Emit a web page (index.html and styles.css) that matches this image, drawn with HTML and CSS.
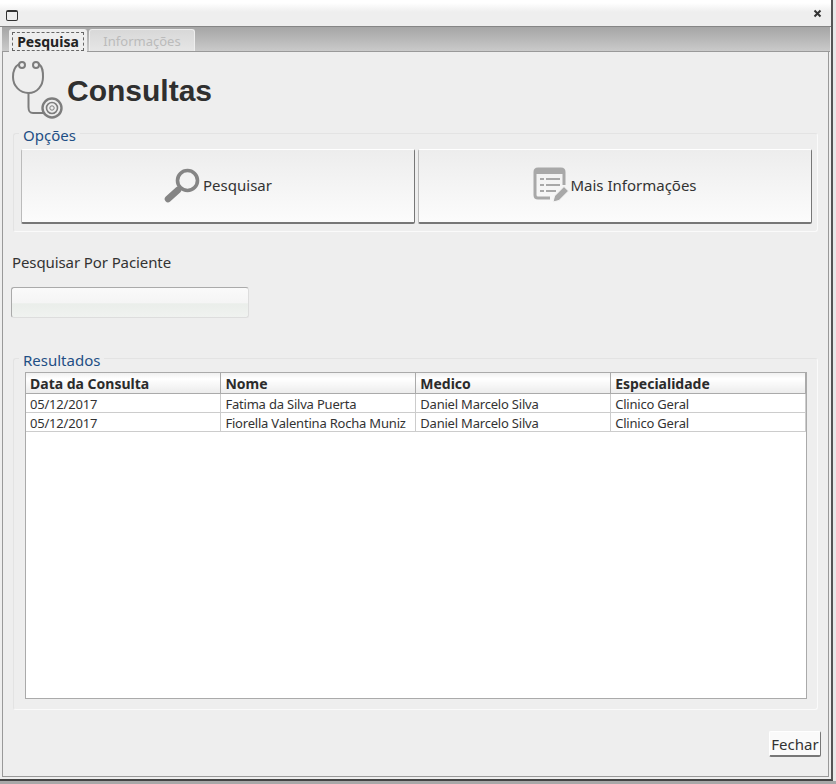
FILE: index.html
```html
<!DOCTYPE html>
<html lang="pt">
<head>
    <meta charset="UTF-8">
    <title>Consultas</title>
    <link rel="stylesheet" href="styles.css">
</head>
<body>
    <div class="window">
        <div class="titlebar">
            <span class="winIcon"></span>
            <svg class="closeIcon" width="9" height="9" viewBox="0 0 9 9"><path d="M1.5 1.5 L7.5 7.5 M7.5 1.5 L1.5 7.5" stroke="#333" stroke-width="2"/></svg>
        </div>
        <div class="tabs">
            <div class="tab active"><span>Pesquisa</span></div>
            <div class="tab">Informações</div>
        </div>
        <div class="panel">
            <div class="heading">
                <svg width="52" height="60" viewBox="0 0 52 60" fill="none" stroke="#7d7d7d" stroke-width="2">
                    <circle cx="10" cy="5" r="3"/>
                    <circle cx="24" cy="5" r="3"/>
                    <path d="M7 4 C2 7 1 12 1 17 C1 26 8 33 16.500 33 C25 33 31 26 31 17 C31 12 31 7 27 4"/>
                    <path d="M16.500 33 V47 C16.500 52 18 53 21 53 H31"/>
                    <circle cx="40" cy="48" r="9.500" stroke-width="2.400"/>
                    <circle cx="40" cy="48" r="5.500" stroke-width="1.600"/>
                    <circle cx="40" cy="48" r="2.200" stroke-width="1"/>
                </svg>
                <h1>Consultas</h1>
            </div>

            <fieldset class="group options">
                <legend>Opções</legend>
                <div class="optionRow">
                    <button class="bigBtn">
                        <svg width="38" height="38" viewBox="0 0 38 38" fill="none">
                            <circle cx="23.500" cy="14.500" r="10" stroke="#858585" stroke-width="3.600"/>
                            <path d="M14 24 L4 33" stroke="#858585" stroke-width="6.500" stroke-linecap="round"/>
                        </svg>
                        Pesquisar
                    </button>
                    <button class="bigBtn">
                        <svg width="36" height="36" viewBox="0 0 36 36" fill="none">
                            <path d="M17 31 H5 Q2 31 2 28 V5 Q2 2 5 2 H28 Q31 2 31 5 V18" stroke="#a8a8a8" stroke-width="3"/>
                            <path d="M2 5 H31" stroke="#a8a8a8" stroke-width="4"/>
                            <path d="M7 12 H11 M13 12 H27 M7 18 H11 M13 18 H27 M7 24 H11 M13 24 H23" stroke="#a8a8a8" stroke-width="2"/>
                            <path d="M20 35 L21.500 29 L31 19.500 L35.500 24 L26 33.500 Z" fill="#a8a8a8" stroke="#f6f6f6"/>
                        </svg>
                        Mais Informações
                    </button>
                </div>
            </fieldset>

            <label class="searchLabel">Pesquisar Por Paciente</label>
            <div class="searchInput"></div>

            <fieldset class="group results">
                <legend>Resultados</legend>
                <div class="tableBox">
                    <table>
                        <thead>
                            <tr><th>Data da Consulta</th><th>Nome</th><th>Medico</th><th>Especialidade</th></tr>
                        </thead>
                        <tbody>
                            <tr><td>05/12/2017</td><td>Fatima da Silva Puerta</td><td>Daniel Marcelo Silva</td><td>Clinico Geral</td></tr>
                            <tr><td>05/12/2017</td><td>Fiorella Valentina Rocha Muniz</td><td>Daniel Marcelo Silva</td><td>Clinico Geral</td></tr>
                        </tbody>
                    </table>
                </div>
            </fieldset>

            <div class="footer">
                <button class="closeBtn">Fechar</button>
            </div>
        </div>
    </div>
</body>
</html>
```

FILE: styles.css
```css
html, body {
    margin: 0;
    height: 784px;
    overflow: hidden;
}
body {
    background: linear-gradient(#e8e8e8, #e8e8e8) no-repeat top right / 3px 781px, #a8a8a8;
    font-family: "Noto Sans", sans-serif;
    color: #333;
}
.window {
    width: 833px;
    height: 781px;
    box-sizing: border-box;
    background: #eee;
    border-right: 2px solid #555;
    border-bottom: 2px solid #444;
    padding-left: 2px;
    display: flex;
    flex-direction: column;
}
.titlebar {
    height: 27px;
    flex: none;
    margin-left: -2px;
    box-sizing: border-box;
    padding: 8px 9px 0 6px;
    display: flex;
    justify-content: space-between;
    align-items: flex-start;
    background: linear-gradient(#fff 0, #fff 3px, #eee 12px);
    border-bottom: 1px solid #858585;
}
.winIcon {
    width: 10px;
    height: 8px;
    margin-top: 2px;
    border: 1px solid #333;
    border-top-width: 2px;
    border-radius: 2px;
}
.closeIcon {
    margin-top: 1px;
}
.tabs {
    height: 25px;
    flex: none;
    margin-right: 1px;
    box-sizing: border-box;
    padding: 2px 0 0 7px;
    display: flex;
    gap: 2px;
    background: linear-gradient(#a5a5a5, #cacaca);
    border-bottom: 1px solid #999;
}
.tab {
    width: 106px;
    height: 22px;
    box-sizing: border-box;
    border: 1px solid #eee;
    border-bottom: none;
    border-radius: 3px 3px 0 0;
    background: linear-gradient(#d8d8d8, #e6e6e6);
    color: #bbb;
    font-size: 13px;
    line-height: 22px;
    text-align: center;
}
.tab.active {
    width: 78px;
    height: 23px;
    background: #eee;
    color: #222;
    font-size: 14px;
    font-weight: bold;
    padding: 2px;
    line-height: 18px;
}
.tab.active span {
    display: block;
    height: 19px;
    border: 1px dashed #666;
    box-sizing: border-box;
    line-height: 17px;
}
.panel {
    flex: 1;
    box-sizing: border-box;
    border-left: 1px solid #999;
    border-right: 1px solid #999;
    border-bottom: 1px solid #999;
    margin-bottom: 2px;
    margin-right: 2px;
    padding: 8px 8px 0 8px;
    display: flex;
    flex-direction: column;
}
.heading {
    height: 60px;
    display: flex;
    align-items: center;
    gap: 3px;
    margin-bottom: 3px;
    padding-left: 1px;
    flex: none;
}
.heading h1 {
    margin: 0;
    padding-top: 2px;
    font: bold 30px "Liberation Sans", sans-serif;
    color: #2f2f2f;
}
.group {
    margin: 0 2px;
    padding: 0;
    border: 1px solid #e3e3e3;
    border-right-color: #fafafa;
    border-bottom-color: #fafafa;
    border-radius: 3px;
    min-width: 0;
    box-sizing: border-box;
    flex: none;
}
.group legend {
    margin-left: 5px;
    padding: 4px 4px 0;
    font-size: 15px;
    line-height: 16px;
    color: #1f4f85;
}
.options {
    height: 109px;
}
.optionRow {
    display: flex;
    gap: 3px;
    padding: 0 5px 0 7px;
    margin-top: 6px;
}
.bigBtn {
    flex: 1;
    height: 75px;
    display: flex;
    align-items: center;
    justify-content: center;
    gap: 1px;
    padding: 0 0 2px;
    border: 1px solid #fff;
    border-left-color: #bbb;
    border-right-color: #777;
    border-bottom: 2px solid #777;
    border-radius: 2px;
    background: linear-gradient(#ededed, #fcfcfc);
    font-family: inherit;
    font-size: 15px;
    color: #333;
}
.searchLabel {
    display: block;
    margin: 21px 0 0 1px;
    font-size: 15px;
    line-height: 18px;
    letter-spacing: -0.1px;
}
.searchInput {
    width: 238px;
    height: 31px;
    flex: none;
    margin-top: 16px;
    box-sizing: border-box;
    border: 1px solid #aaa;
    border-right-color: #ddd;
    border-bottom-color: #ddd;
    border-radius: 3px;
    background: linear-gradient(#fafafa 0, #f5f5f5 50%, #eaeeea 55%, #f0f2f0 100%);
}
.results {
    margin-top: 30px;
    height: 362px;
}
.tableBox {
    margin: 4px 10px 0 11px;
    height: 327px;
    box-sizing: border-box;
    background: #fff;
    border: 1px solid #aaa;
}
table {
    width: 100%;
    border-collapse: collapse;
    table-layout: fixed;
    font-size: 13px;
}
th {
    height: 20px;
    padding: 0 0 0 4px;
    text-align: left;
    font-size: 14px;
    border-right: 1px solid #aaa;
    border-bottom: 1px solid #aaa;
    background: linear-gradient(#f0f0f0, #fff 30%, #ececec);
    color: #2b2b2b;
}
td {
    height: 16px;
    padding: 2px 0 0 4px;
    line-height: 16px;
    white-space: nowrap;
    letter-spacing: -0.2px;
    border-right: 1px solid #ccc;
    border-bottom: 1px solid #ccc;
}
.footer {
    display: flex;
    justify-content: flex-end;
    margin: 21px -1px 0 0;
}
.closeBtn {
    width: 52px;
    height: 26px;
    padding: 0;
    border: 1px solid #fff;
    border-right-color: #777;
    border-bottom: 2px solid #777;
    border-radius: 2px;
    background: #fafafa;
    font-family: inherit;
    font-size: 15px;
    color: #333;
}
```
